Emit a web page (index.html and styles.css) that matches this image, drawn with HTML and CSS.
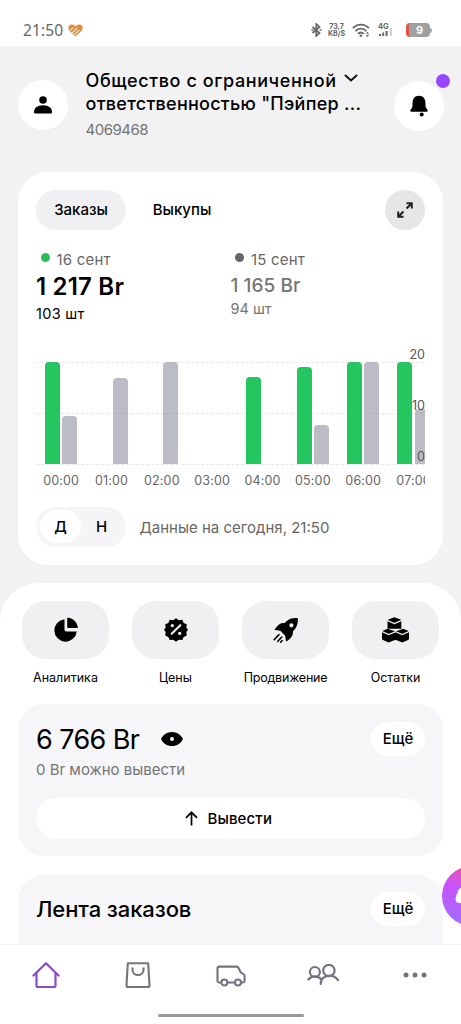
FILE: index.html
```html
<!DOCTYPE html>
<html lang="ru">
<head>
<meta charset="utf-8">
<title>Кабинет продавца</title>
<link rel="stylesheet" href="styles.css">
</head>
<body>
<div class="app">
  <div class="statusbar">
    <span class="clock">21:50</span>
    <svg class="heart" width="15" height="13" viewBox="0 0 15 13"><path d="M7.5 12.5 1.2 6.4C-.5 4.3.5 .7 3.7.6 5.4.5 6.6 1.4 7.5 2.6 8.5 1.2 9.8.5 11.4.6c3 .2 4.2 3.5 2.4 5.8z" fill="#e28b3b"/><path d="M2.2 6.3 5.3 3.6M4 9 9.3 3.8M6.5 10.6l4.8-4.8" stroke="#fff3df" stroke-width="1.1"/></svg>
    <div class="indicators">
      <svg class="bt" width="11" height="14" viewBox="0 0 11 14" fill="none" stroke="#666" stroke-width="1.7"><path d="m1.5 4 7 6-3.2 3V1l3.2 3-7 6"/><path d="M.4 7h2M8.6 7h2"/></svg>
      <span class="speed"><span>73,7</span><span>KB/S</span></span>
      <svg class="wifi" width="18" height="15" viewBox="0 0 18 15" fill="none" stroke="#666" stroke-width="1.9"><path d="M.9 5.2c4.4-4.8 11.6-4.8 16 0M3.5 8.1c3-3.3 7.8-3.3 10.8 0M6 10.8c1.6-1.7 4.1-1.7 5.7 0"/><circle cx="8.8" cy="12.8" r="1.300" fill="#666" stroke="none"/><path d="m13.8 10.8 1.7-2 1.7 2zM13.8 12l1.7 2 1.7-2z" fill="#666" stroke="none"/></svg>
      <svg class="cell" width="15" height="14" viewBox="0 0 15 14"><text x="0" y="6.2" class="net">4G</text><path d="M1 11h2v2H1zM4.2 9.6h2V13h-2zM7.6 8h2v5h-2z" fill="#666"/><path d="M11.8 5h2v8h-2z" fill="#ccc"/></svg>
      <span class="battery">9</span><span class="battery-tip"></span>
    </div>
  </div>

  <main class="content">
    <header class="header">
      <div class="round"><svg width="20" height="20" viewBox="0 0 20 20"><circle cx="10" cy="5" r="3.8"/><path d="M1 17.2c0-4 3-7 9-7s9 3 9 7c0 .8-.4 1.2-1.2 1.2H2.2C1.4 18.400 1 18 1 17.200z"/></svg></div>
      <div class="company">
        <div class="name"><span class="n1">Общество с ограниченной</span><svg class="chev" width="14" height="9" viewBox="0 0 14 9" fill="none" stroke="#111" stroke-width="2" stroke-linecap="round"><path d="m1.500 1.500 5.500 5 5.500-5"/></svg></div>
        <div class="name"><span class="n2">ответственностью "Пэйпер ...</span></div>
        <div class="id">4069468</div>
      </div>
      <div class="round bell"><svg width="20" height="24" viewBox="0 0 20 24"><path d="M10 1.800C6 1.800 3.800 4.600 3.600 8.200l-.2 4.300c-.1 1.400-1.700 2.600-2.100 4-.2.800.1 1.200 1 1.200h15.400c.9 0 1.200-.4 1-1.200-.4-1.400-2-2.600-2.100-4l-.2-4.300C16.200 4.600 14 1.800 10 1.800z"/><circle cx="12.700" cy="20.400" r="2"/></svg><i class="badge"></i></div>
    </header>

    <section class="orders">
      <div class="tabs">
        <span class="tab active">Заказы</span><span class="tab">Выкупы</span>
        <span class="expand"><svg width="18" height="18" viewBox="0 0 18 18" fill="none" stroke="#222" stroke-width="2"><path d="M10.500 7.500 15 3M10.500 2.200h5.300v5.300M7.500 10.500 3 15M2.200 10.500v5.300h5.300"/></svg></span>
      </div>
      <div class="stats">
        <div class="stat today"><div class="day"><i class="dot"></i><span>16 сент</span></div><div class="sum">1 217 Br</div><div class="qty">103 шт</div></div>
        <div class="stat prev"><div class="day"><i class="dot"></i><span>15 сент</span></div><div class="sum">1 165 Br</div><div class="qty">94 шт</div></div>
      </div>
      <div class="chart">
        <div class="plot">
          <div class="col"><i class="bar g" style="height:102px"></i><i class="bar p" style="height:48px"></i></div>
          <div class="col"><i class="bar g" style="height:0"></i><i class="bar p" style="height:86px"></i></div>
          <div class="col"><i class="bar g" style="height:0"></i><i class="bar p" style="height:102px"></i></div>
          <div class="col"></div>
          <div class="col"><i class="bar g" style="height:87px"></i><i class="bar p" style="height:0"></i></div>
          <div class="col"><i class="bar g" style="height:97px"></i><i class="bar p" style="height:39px"></i></div>
          <div class="col"><i class="bar g" style="height:102px"></i><i class="bar p" style="height:102px"></i></div>
          <div class="col"><i class="bar g" style="height:102px"></i><i class="bar p" style="height:55px"></i></div>
        </div>
        <svg class="grid" width="389" height="103" viewBox="0 0 389 103" stroke="#888" stroke-opacity=".2" stroke-dasharray="3 2"><path d="M0 .5h389M0 51.500h389M0 102.500h389"/></svg>
        <div class="scale"><span>20</span><span>10</span><span>0</span></div>
        <div class="hours"><span>00:00</span><span>01:00</span><span>02:00</span><span>03:00</span><span>04:00</span><span>05:00</span><span>06:00</span><span>07:00</span></div>
      </div>
      <div class="period">
        <div class="toggle"><span class="on">Д</span><span>Н</span></div>
        <span class="updated">Данные на сегодня, 21:50</span>
      </div>
    </section>

    <section class="sheet">
      <div class="actions">
        <div class="action"><div class="tile"><svg width="26" height="26" viewBox="0 0 26 26"><path d="M11.500 2.300A11.200 11.200 0 1 0 23.700 14.500H13.500a2 2 0 0 1-2-2z"/><path d="M14.200 1.500c0-.6.300-.9.900-.8 5 .5 8.900 4.300 9.700 9.400.1.700-.2 1-.8 1h-8.800c-.7 0-1-.3-1-1z"/></svg></div><span class="a1">Аналитика</span></div>
        <div class="action"><div class="tile"><svg width="24" height="25" viewBox="0 0 26 26"><path d="m13 .8 3 2.200 3.800-.5 1.500 3.400 3.400 1.500-.5 3.700L26 13l-1.800 2.900.5 3.700-3.400 1.500-1.500 3.400-3.800-.5-3 2.200-3-2.200-3.800.5-1.500-3.400-3.400-1.500.5-3.700L0 13l1.800-1.900-.5-3.700 3.400-1.500 1.500-3.400L10 3z"/><path d="m8.300 17.700 9.400-9.400" stroke="#f0f0f2" stroke-width="2.200" stroke-linecap="round"/><circle cx="9" cy="8.800" r="1.800" fill="#f0f0f2"/><circle cx="17" cy="17.200" r="1.800" fill="#f0f0f2"/></svg></div><span class="a2">Цены</span></div>
        <div class="action"><div class="tile"><svg width="26" height="26" viewBox="0 0 28 28"><path fill-rule="evenodd" d="M25.500 1.200c.9 0 1.300.4 1.300 1.300-.1 6-1.300 9-5.400 13.100.4 4-1.700 7.200-6.500 10.500-.6.300-.9.100-1-.5l-.8-5.500-5.200-5.200-5.500-.8c-.7-.1-.8-.5-.4-1C5.200 8.300 8.400 6.200 12.400 6.600c4.100-4.100 7.100-5.300 13.100-5.400zM19.800 6.700a2.200 2.200 0 1 0 0 4.500 2.200 2.200 0 0 0 0-4.500z"/><path d="m6.400 19-5.200 5.500M9.500 21.500l-4.300 4.700M9.800 25.400l-1.500 1.700" stroke="#000" stroke-width="1.700" stroke-linecap="round"/></svg></div><span class="a3">Продвижение</span></div>
        <div class="action"><div class="tile"><svg width="27" height="26" viewBox="0 0 27 26"><path d="m12.500 .2 5.800 2.200q1 .4 1 1.400v8H5.500v-8q0-1 1-1.400zM5.500 11.700 13.500 14.500l7.800-2.800 4.700 2q1 .5 1 1.500v6.500q0 1-1 1.400l-5.600 2.500-5.600-2.300q-1.300-.5-2.600 0l-5.600 2.300L1 23.100q-1-.4-1-1.400v-6.500q0-1 1-1.500z"/><path d="m5 3.300 7.500 3.200 7.300-3.200M0 14.600l6.800 2.900 6.700-2.900 6.800 2.900 6.700-2.900" fill="none" stroke="#f0f0f2" stroke-width="1.300"/></svg></div><span class="a4">Остатки</span></div>
      </div>

      <div class="panel balance">
        <div class="line"><span class="amount">6 766 Br</span><svg class="eye" width="22" height="16" viewBox="0 0 22 16"><path fill-rule="evenodd" d="M11 1C6 1 2.200 4 .4 7.300c-.3.500-.3.900 0 1.400C2.200 12 6 15 11 15s8.800-3 10.600-6.300c.3-.5.300-.9 0-1.400C19.800 4 16 1 11 1zm0 5a2 2 0 1 1 0 4 2 2 0 0 1 0-4z"/></svg><span class="more">Ещё</span></div>
        <div class="available">0 Br можно вывести</div>
        <div class="withdraw"><svg width="13" height="15" viewBox="0 0 13 15" fill="none" stroke="#000" stroke-width="1.700"><path d="M6.500 14.500V1.500M1 6.800l5.500-5.500L12 6.800"/></svg><span>Вывести</span></div>
      </div>
      <div class="panel feed">
        <div class="line"><span class="title">Лента заказов</span><span class="more">Ещё</span></div>
      </div>
    </section>
    <div class="assistant"><svg width="60" height="60" viewBox="0 0 60 60"><defs><linearGradient id="fab" x1=".6" y1="0" x2=".4" y2="1"><stop offset="0" stop-color="#f0529f"/><stop offset=".4" stop-color="#c653fa"/><stop offset="1" stop-color="#a36bff"/></linearGradient></defs><circle cx="30" cy="30" r="30" fill="url(#fab)"/><path d="M20 22c-3 0-4 2-4.500 5-2 3-2.500 7-1 9 2 2 6 1 8 0h20V22z" fill="#fff"/></svg></div>
  </main>

  <nav class="nav">
    <div class="tabsbar">
      <span class="item"><svg width="28" height="28" viewBox="0 0 28 28" fill="none" stroke="#8a4bc8" stroke-width="2.200" stroke-linejoin="round" stroke-linecap="round"><path d="M1.500 14.500 14 2.200l12.500 12.300M4.500 12v12.500c0 1 .5 1.500 1.500 1.500h16c1 0 1.500-.5 1.500-1.500V12"/></svg></span>
      <span class="item"><svg width="28" height="28" viewBox="0 0 28 28" fill="none" stroke="#757380" stroke-width="2.100" stroke-linejoin="round"><path d="M3.800 2.200h20.400l1.300 22.300c0 1-.5 1.500-1.500 1.500H4c-1 0-1.500-.5-1.500-1.500z"/><path d="M8.500 6.500v2.300c0 7 11 7 11 0V6.500"/></svg></span>
      <span class="item"><svg width="30" height="28" viewBox="0 0 30 28" fill="none" stroke="#757380" stroke-width="2.100" stroke-linejoin="round"><path d="M5 21.500H3.200c-1 0-1.700-.6-1.700-1.600V7.500c0-1.200.7-1.900 1.900-1.900h17c1 0 1.700.4 2.200 1.400l2 4.200c.4.600 4 2 4 3.300v5c0 1.300-.8 2-2 2h-1.300M11.500 21.500h7.500"/><circle cx="8.300" cy="21.500" r="3"/><circle cx="22" cy="21.500" r="3"/></svg></span>
      <span class="item"><svg width="32" height="28" viewBox="0 0 32 28" fill="none" stroke="#757380" stroke-width="2.200" stroke-linecap="round"><circle cx="7.900" cy="11" r="5"/><circle cx="21.900" cy="9.500" r="5.700"/><path d="M1.400 18.500c3.300-4.300 9.700-4.300 13 0M13.700 23c.2-9 12-11 17.300-4"/></svg></span>
      <span class="item"><svg width="28" height="28" viewBox="0 0 28 28" fill="#757380"><circle cx="5" cy="14" r="2.500"/><circle cx="14" cy="14" r="2.500"/><circle cx="23" cy="14" r="2.500"/></svg></span>
    </div>
    <div class="homebar"></div>
  </nav>
</div>
</body>
</html>
```
FILE: styles.css
```css
* { box-sizing: border-box; }
body { margin: 0; font-family: Inter, "Open Sans", sans-serif; color: #000; }
svg { display: block; flex: none; }
i { display: block; }
span { white-space: nowrap; }
.app { width: 461px; height: 1024px; display: flex; flex-direction: column; overflow: hidden; background: #f2f2f2; }

.statusbar { height: 46px; flex: none; background: #fff; display: flex; align-items: center; padding: 14px 29px 0 23px; color: #666; }
.clock { font: 15.500px/20px "Noto Sans", sans-serif; letter-spacing: .1px; width: 45px; }
.indicators { margin-left: auto; display: flex; align-items: center; }
.speed { display: flex; flex-direction: column; font: 700 7px/7px Inter, sans-serif; align-items: center; width: 17px; margin: 0 7px 0 6px; }
.cell { margin: 0 13px 0 8px; }
.net { font: 700 7.500px Inter, sans-serif; fill: #666; }
.battery { width: 24px; height: 14px; border-radius: 4px; background: #a0a0a0; border-left: 3px solid #e35349; color: #fff; font: 700 11px/14px Inter, sans-serif; text-align: center; }
.battery-tip { width: 2px; height: 5px; background: #aaa; border-radius: 0 2px 2px 0; }

.content { flex: 1; min-height: 0; overflow: hidden; position: relative; display: flex; flex-direction: column; }
.header { height: 126px; flex: none; display: flex; padding: 0 17px 0 18px; }
.round { width: 50px; height: 50px; margin-top: 34px; border-radius: 50%; background: #fff; display: flex; align-items: center; justify-content: center; flex: none; position: relative; }
.bell { margin: 35px 0 0 auto; }
.badge { position: absolute; right: -6px; top: -7px; width: 14px; height: 14px; border-radius: 50%; background: #9747ff; }
.company { margin-left: 17.500px; padding-top: 23px; }
.name { font-size: 18px; font-weight: 500; line-height: 23px; height: 23px; display: flex; align-items: center; }
.n1 { letter-spacing: .6px; }
.n2 { letter-spacing: .27px; }
.chev { margin: -5px 0 0 7.500px; }
.id { font-size: 15px; line-height: 20px; margin-top: 5px; letter-spacing: -.5px; color: #757575; }

.orders { height: 392.500px; flex: none; margin: 0 18px; padding: 18px; background: #fff; border-radius: 30px; }
.tabs { display: flex; height: 40px; }
.tab { width: 90px; border-radius: 20px; font-size: 15px; font-weight: 500; line-height: 40px; text-align: center; margin-right: 11px; }
.active { background: #f0f0f2; }
.expand { width: 40px; height: 40px; border-radius: 50%; background: #e6e6e6; margin-left: auto; display: flex; align-items: center; justify-content: center; }
.stats { display: flex; height: 77px; margin-top: 19px; }
.stat { width: 194.500px; }
.day { display: flex; align-items: center; height: 21px; font-size: 15px; letter-spacing: .2px; color: #666; }
.dot { width: 9px; height: 9px; border-radius: 50%; background: #2dbb5d; margin: -4px 7px 0 4.500px; }
.sum { font-size: 24px; font-weight: 600; line-height: 32px; letter-spacing: .2px; padding-top: 1px; margin-bottom: -1px; }
.qty { font-size: 14.500px; line-height: 24px; letter-spacing: .3px; }
.prev { color: #757575; }
.prev .dot { background: #66656b; }
.prev .sum { font-size: 19px; font-weight: 500; line-height: 30px; letter-spacing: .05px; }
.prev .qty { line-height: 18px; letter-spacing: 0; }

.chart { margin-top: 36px; position: relative; width: 389px; height: 126px; }
.plot { display: flex; height: 102px; overflow: hidden; }
.col { width: 50.350px; flex: none; display: flex; justify-content: center; align-items: flex-end; gap: 2.500px; }
.bar { width: 15px; border-radius: 4px 4px 0 0; }
.g { background: #24c65f; }
.p { background: #bcbcc6; }
.grid { position: absolute; left: 0; top: -.5px; }
.scale { position: absolute; right: 0; top: -15px; text-align: right; font-size: 12.500px; line-height: 16px; color: #555; display: flex; flex-direction: column; gap: 35px; }
.hours { display: flex; padding-top: 9px; overflow: hidden; font-size: 12.500px; line-height: 16px; letter-spacing: .15px; color: #666; }
.hours span { width: 50.350px; flex: none; text-align: center; }
.period { display: flex; align-items: center; margin-top: 18.500px; height: 40px; }
.toggle { width: 90px; height: 40px; border-radius: 20px; background: #f5f5f7; display: flex; padding: 3.500px 4px; }
.toggle span { width: 41px; height: 33px; line-height: 33px; text-align: center; font-size: 15px; font-weight: 500; }
.on { background: #fff; border-radius: 17px; }
.updated { margin: 1px 0 0 13.500px; font-size: 15px; color: #666; }

.sheet { margin-top: 18.500px; flex: none; height: 460px; background: #fff; border-radius: 38px 38px 0 0; padding: 17.500px 18px 0; }
.actions { display: grid; grid-template-columns: repeat(4, 1fr); margin: 0 -7.500px; height: 103.500px; }
.action { display: flex; flex-direction: column; align-items: center; font-size: 12.500px; line-height: 16px; }
.a3 { letter-spacing: -.2px; }
.tile { width: 87.500px; height: 58px; border-radius: 24px; background: #f0f0f2; display: flex; align-items: center; justify-content: center; margin-bottom: 11px; }
.panel { background: #f6f6f8; border-radius: 26px; padding: 18px; }
.balance { height: 152px; }
.line { display: flex; height: 34px; align-items: center; }
.more { width: 54px; height: 34px; border-radius: 17px; background: #fff; font-size: 15px; font-weight: 500; line-height: 33px; text-align: center; margin-left: auto; }
.amount { font-size: 27px; line-height: 34px; width: 124.500px; padding-top: 2px; letter-spacing: -.6px; }
.available { font-size: 15px; line-height: 20px; margin-top: 4px; color: #757575; }
.withdraw { display: flex; align-items: center; justify-content: center; height: 41px; background: #fff; border-radius: 21px; margin-top: 18px; padding-right: 4px; font-size: 15px; font-weight: 500; letter-spacing: .15px; gap: 9.500px; }
.feed { margin-top: 19px; height: 120px; padding-top: 17px; }
.title { font-size: 22px; font-weight: 500; letter-spacing: -.1px; }
.assistant { position: absolute; left: 442px; top: 820px; }

.nav { height: 80px; flex: none; background: #fff; border-top: 1px solid #f3f3f3; display: flex; flex-direction: column; align-items: center; }
.tabsbar { display: flex; width: 461px; height: 60px; }
.item { flex: 1; display: flex; justify-content: center; padding-top: 15.500px; }
.homebar { width: 146px; height: 3px; border-radius: 2px; background: #999; margin-top: 9px; }
```
